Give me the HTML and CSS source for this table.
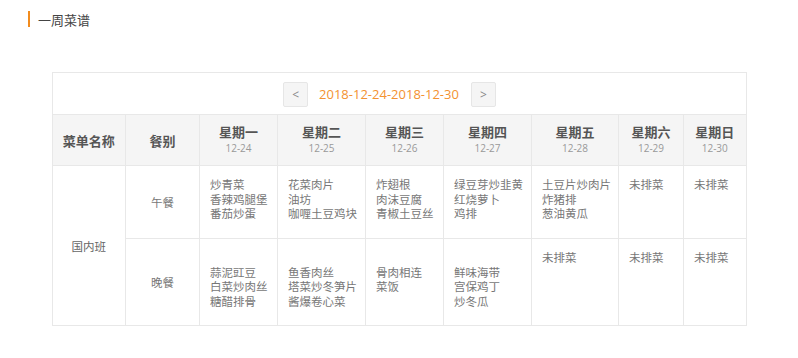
FILE: index.html
```html
<!DOCTYPE html>
<html lang="zh">
<head>
<meta charset="utf-8">
<title>一周菜谱</title>
<link rel="stylesheet" href="styles.css">
</head>
<body>
<div class="page">
  <h2 class="title">一周菜谱</h2>
  <div class="panel">
    <div class="nav">
      <button class="nav-btn" type="button">&lt;</button>
      <span class="range">2018-12-24-2018-12-30</span>
      <button class="nav-btn" type="button">&gt;</button>
    </div>
    <table class="menu">
      <colgroup>
        <col class="c1"><col class="c2"><col class="c3"><col class="c4"><col class="c5"><col class="c6"><col class="c7"><col class="c8"><col class="c9">
      </colgroup>
      <thead>
        <tr class="head-row">
          <th>菜单名称</th>
          <th>餐别</th>
          <th><div class="day">星期一</div><div class="date">12-24</div></th>
          <th><div class="day">星期二</div><div class="date">12-25</div></th>
          <th><div class="day">星期三</div><div class="date">12-26</div></th>
          <th><div class="day">星期四</div><div class="date">12-27</div></th>
          <th><div class="day">星期五</div><div class="date">12-28</div></th>
          <th><div class="day">星期六</div><div class="date">12-29</div></th>
          <th><div class="day">星期日</div><div class="date">12-30</div></th>
        </tr>
      </thead>
      <tbody>
        <tr class="lunch">
          <td class="group" rowspan="2">国内班</td>
          <td class="meal">午餐</td>
          <td class="dish"><div>炒青菜</div><div>香辣鸡腿堡</div><div>番茄炒蛋</div></td>
          <td class="dish"><div>花菜肉片</div><div>油坊</div><div>咖喱土豆鸡块</div></td>
          <td class="dish"><div>炸翅根</div><div>肉沫豆腐</div><div>青椒土豆丝</div></td>
          <td class="dish"><div>绿豆芽炒韭黄</div><div>红烧萝卜</div><div>鸡排</div></td>
          <td class="dish"><div>土豆片炒肉片</div><div>炸猪排</div><div>葱油黄瓜</div></td>
          <td class="dish"><div>未排菜</div></td>
          <td class="dish"><div>未排菜</div></td>
        </tr>
        <tr class="dinner">
          <td class="meal">晚餐</td>
          <td class="dish"><div class="list"><div>蒜泥豇豆</div><div>白菜炒肉丝</div><div>糖醋排骨</div></div></td>
          <td class="dish"><div class="list"><div>鱼香肉丝</div><div>塔菜炒冬笋片</div><div>酱爆卷心菜</div></div></td>
          <td class="dish"><div class="list"><div>骨肉相连</div><div>菜饭</div></div></td>
          <td class="dish"><div class="list"><div>鲜味海带</div><div>宫保鸡丁</div><div>炒冬瓜</div></div></td>
          <td class="dish"><div>未排菜</div></td>
          <td class="dish"><div>未排菜</div></td>
          <td class="dish"><div>未排菜</div></td>
        </tr>
      </tbody>
    </table>
  </div>
</div>
</body>
</html>
```
FILE: styles.css
```css
html, body {
  margin: 0;
  padding: 0;
  background: #fff;
}
body {
  font-family: "Open Sans", "Noto Sans CJK SC", sans-serif;
  color: #666;
}
.page {
  padding-top: 11px;
}
.title {
  margin: 0 0 0 28px;
  padding: 2px 0 0 8px;
  border-left: 2px solid #f28c1e;
  font-family: "Noto Sans CJK SC", sans-serif;
  font-size: 13px;
  font-weight: normal;
  line-height: 14px;
  color: #444;
}
.panel {
  width: 693px;
  margin: 45px auto 0;
  border: 1px solid #e8e8e8;
  border-bottom: none;
}
.nav {
  display: flex;
  justify-content: center;
  align-items: center;
  gap: 11px;
  height: 41px;
  padding: 1px 19px 0 0;
  box-sizing: border-box;
}
.nav-btn {
  width: 25px;
  height: 25px;
  padding: 0;
  border: 1px solid #e6e6e6;
  border-radius: 2px;
  background: #f5f5f5;
  color: #888;
  font-family: "Open Sans", sans-serif;
  font-size: 12px;
  line-height: 23px;
}
.range {
  color: #f39231;
  font-size: 13px;
  font-family: "Open Sans", sans-serif;
  margin-right: 1px;
}
.menu {
  width: 100%;
  border-collapse: collapse;
  table-layout: fixed;
}
.c1 { width: 73px; }
.c2 { width: 74px; }
.c3 { width: 78px; }
.c4 { width: 88px; }
.c5 { width: 78px; }
.c6 { width: 88px; }
.c7 { width: 87px; }
.c8 { width: 65px; }
.c9 { width: 62px; }
.menu th, .menu td {
  border: 1px solid #e8e8e8;
  padding: 0;
}
.menu tr > :first-child { border-left: none; }
.menu tr > :last-child { border-right: none; }
.head-row { height: 51px; }
.head-row th {
  background: #f5f5f5;
  text-align: center;
  vertical-align: middle;
  font-family: "Noto Sans CJK SC", sans-serif;
  font-size: 13px;
  font-weight: bold;
  color: #555;
}
.day {
  line-height: 17px;
}
.date {
  font-family: "Open Sans", sans-serif;
  font-size: 10px;
  font-weight: normal;
  line-height: 17px;
  color: #999;
}
.lunch { height: 73px; }
.dinner { height: 87px; }
.group, .meal {
  text-align: center;
  vertical-align: middle;
  font-family: "Noto Sans CJK SC", sans-serif;
  font-size: 11.5px;
  color: #777;
}
.group { color: #666; }
.menu .dish {
  vertical-align: top;
  padding: 11px 0 0 10px;
  font-family: "Noto Sans CJK SC", sans-serif;
  font-size: 11.5px;
  line-height: 14.5px;
  color: #777;
}
.list {
  padding-top: 14.5px;
}
```
